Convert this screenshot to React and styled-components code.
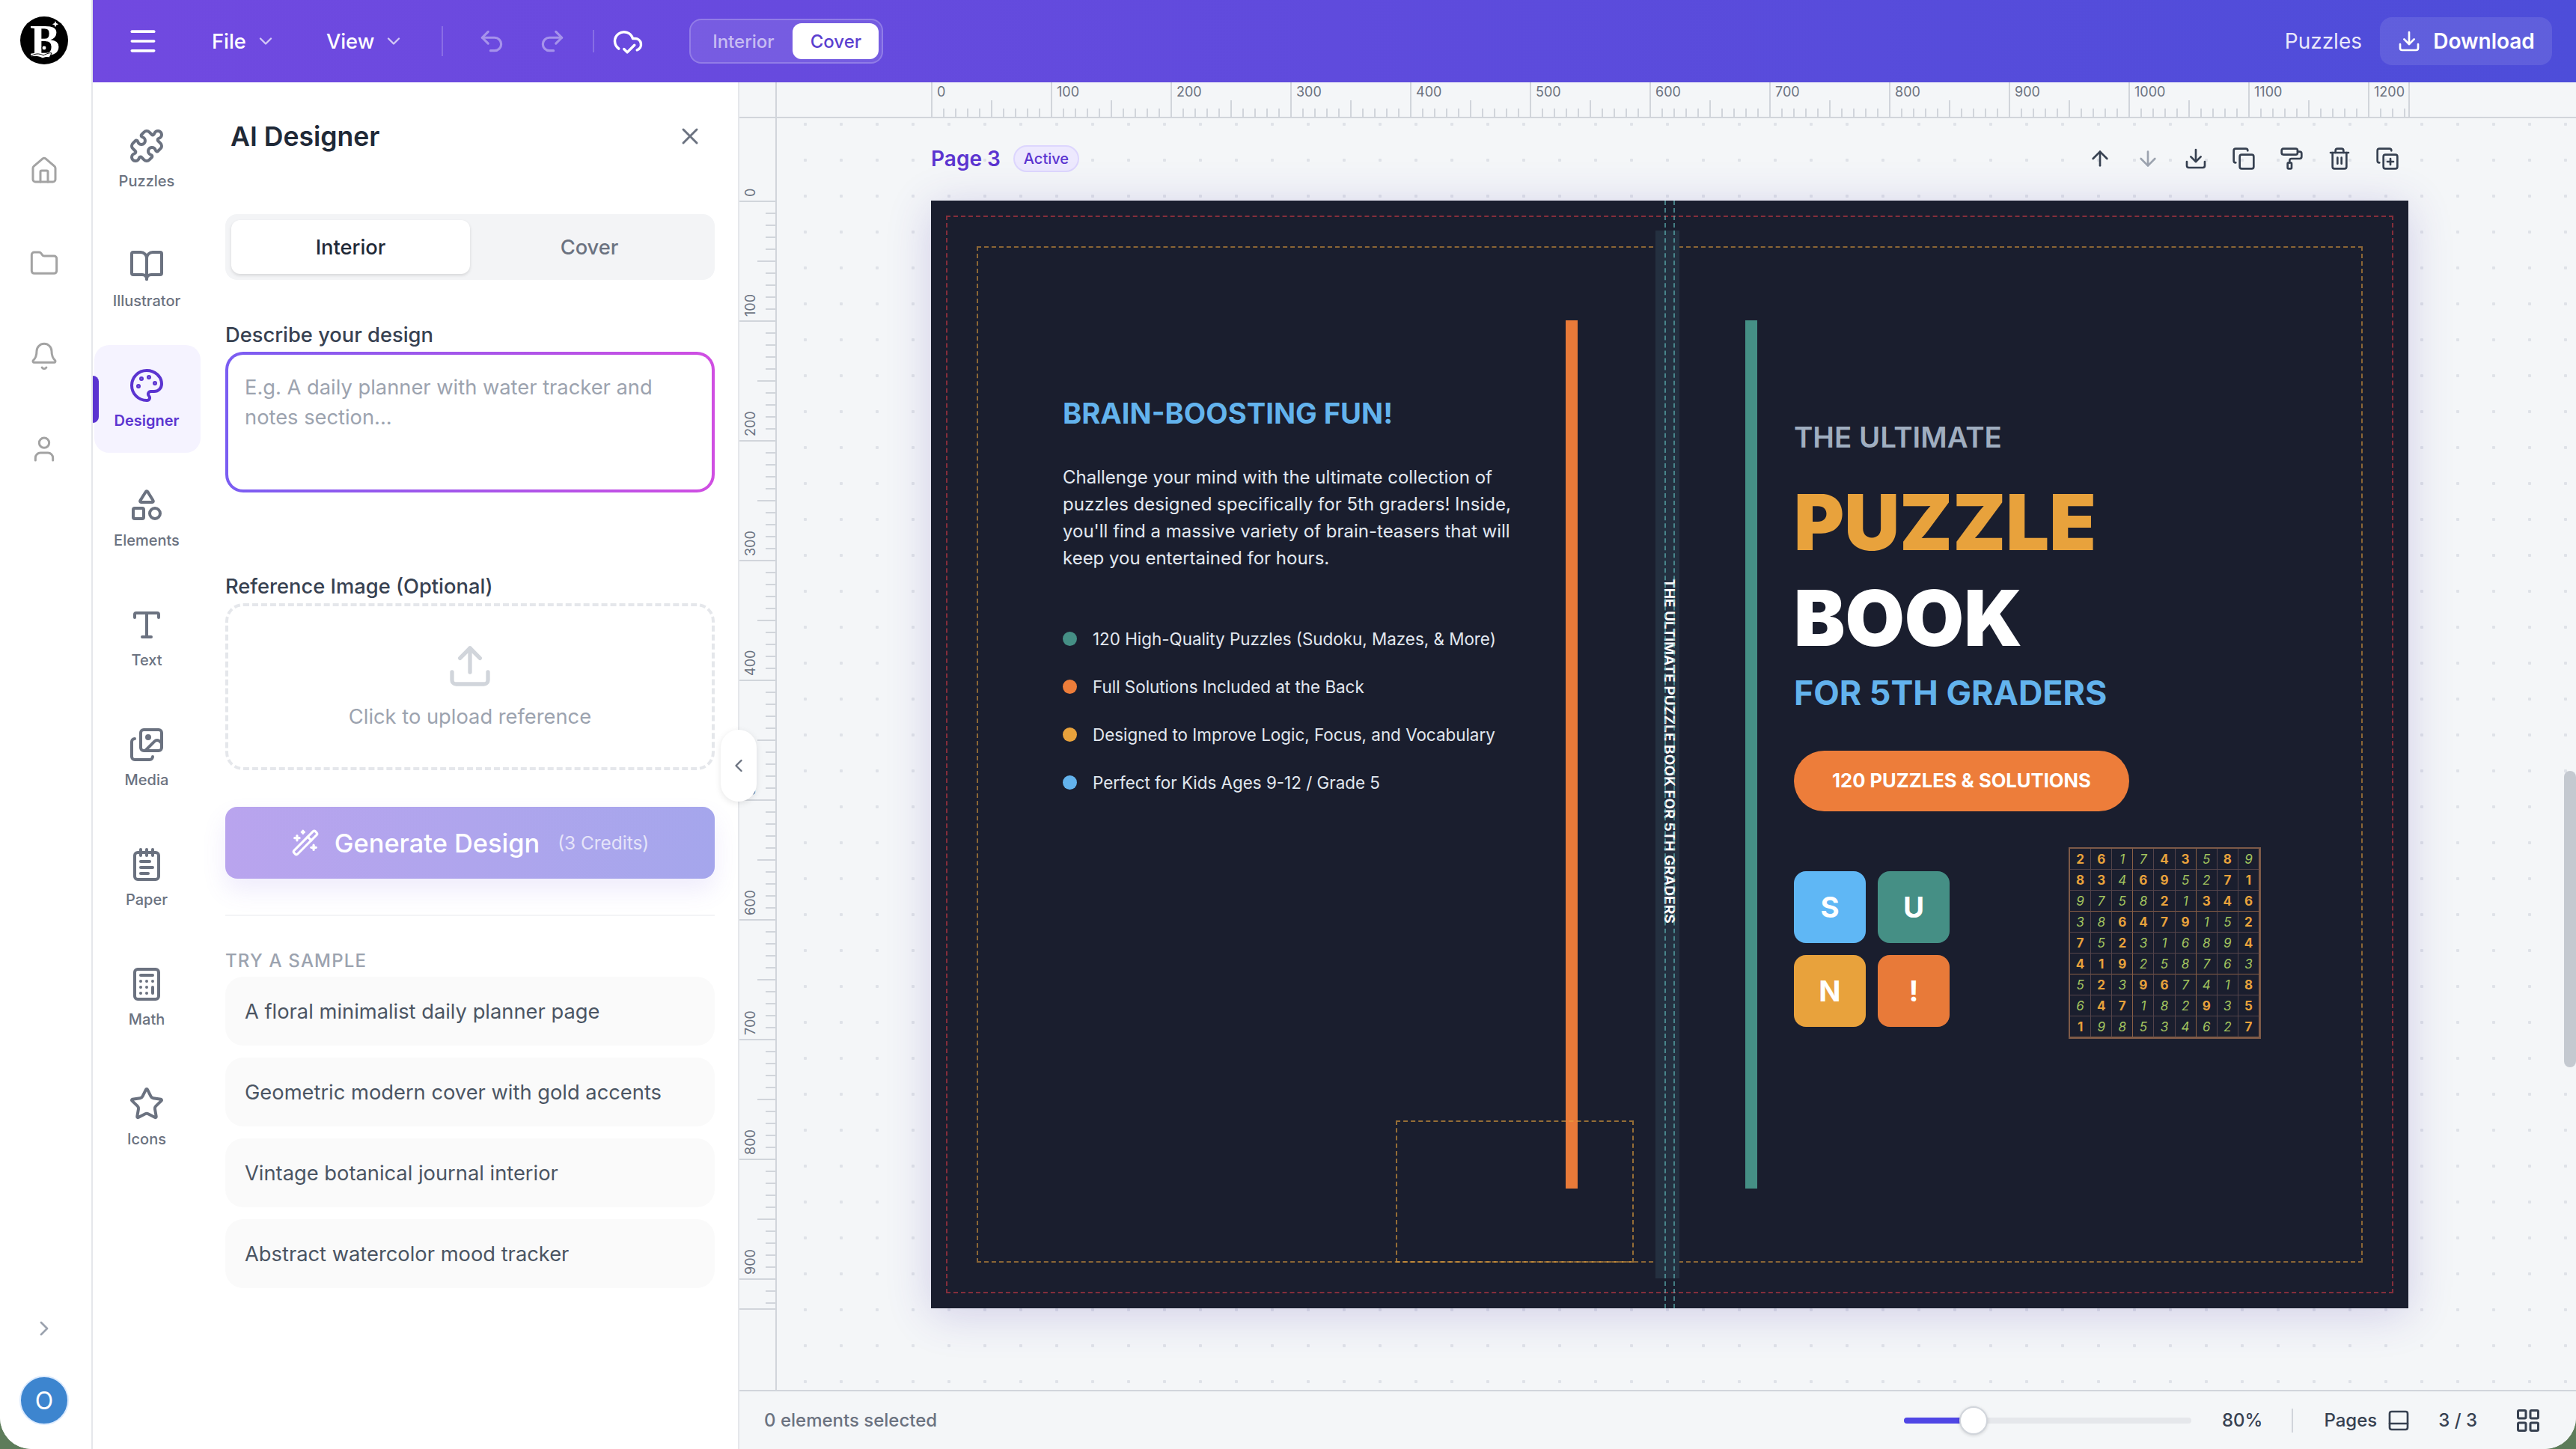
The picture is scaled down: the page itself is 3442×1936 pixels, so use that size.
import React from "react";
import styled, { createGlobalStyle } from "styled-components";
import {
  ArrowDown,
  ArrowUp,
  Bell,
  BookOpen,
  Calculator,
  ChevronDown,
  ChevronLeft,
  ChevronRight,
  CloudCheck,
  Copy,
  CopyPlus,
  Download,
  Folder,
  House,
  Images,
  LayoutGrid,
  Menu,
  NotepadText,
  PaintRoller,
  PanelBottom,
  Palette,
  Puzzle,
  Redo2,
  Shapes,
  Star,
  Trash2,
  Type,
  Undo2,
  Upload,
  User,
  WandSparkles,
  X,
} from "lucide-react";

const GlobalStyle = createGlobalStyle`
  html, body {
    margin: 0;
    width: 3442px;
    height: 1936px;
    overflow: hidden;
    background: #5d7c5a;
  }
  * { box-sizing: border-box; }
  body { font-family: Inter, "Noto Sans", sans-serif; }
`;

const Window = styled.div`
  position: relative;
  display: flex;
  width: 3442px;
  height: 1936px;
  overflow: hidden;
  background: #fff;
  border-radius: 0 0 42px 42px;
`;

/* far left rail */
const Rail = styled.nav`
  flex: 0 0 124px;
  display: flex;
  flex-direction: column;
  align-items: center;
  padding: 22px 4px 32px 0;
  border-right: 2px solid #e5e7eb;
  background: #fff;
`;
const RailIcons = styled.div`
  display: flex;
  flex-direction: column;
  gap: 84px;
  margin-top: 122px;
  color: #a3a3a3;
`;
const RailChevron = styled.div`
  margin-top: auto;
  height: 32px;
  color: #9ca3af;
`;
const Avatar = styled.div`
  display: flex;
  align-items: center;
  justify-content: center;
  width: 66px;
  height: 66px;
  margin-top: 47px;
  border-radius: 50%;
  border: 2px solid #dbeafe;
  background: #3d85cf;
  color: #fff;
  font-size: 32px;
`;

const Main = styled.div`
  flex: 1;
  display: flex;
  flex-direction: column;
  min-width: 0;
`;

/* top bar */
const TopBar = styled.header`
  flex: 0 0 110px;
  display: flex;
  align-items: center;
  padding: 0 32px 0 45px;
  background: linear-gradient(90deg, #7149e0, #4d4dd9);
  color: #fff;
`;
const MenuButton = styled.div`
  display: flex;
  align-items: center;
  gap: 12px;
  margin-left: ${({ $ml }) => $ml}px;
  font-size: 27.3px;
  font-weight: 500;
  svg { opacity: 0.7; }
`;
const BarIcon = styled.div`
  display: flex;
  margin-left: ${({ $ml }) => $ml}px;
  opacity: ${({ $dim }) => ($dim ? 0.4 : 1)};
`;
const BarDivider = styled.div`
  width: 2px;
  height: ${({ $h }) => $h}px;
  margin-left: ${({ $ml }) => $ml}px;
  background: rgba(255, 255, 255, 0.2);
`;
const ModeToggle = styled.div`
  display: flex;
  align-items: center;
  width: 259px;
  height: 60px;
  margin-left: 61px;
  padding: 0 4px;
  border: 2px solid rgba(255, 255, 255, 0.2);
  border-radius: 16px;
  background: rgba(255, 255, 255, 0.1);
`;
const ModeItem = styled.div`
  display: flex;
  align-items: center;
  justify-content: center;
  width: ${({ $on }) => ($on ? 115 : 132)}px;
  height: 48px;
  border-radius: 12px;
  font-size: 24px;
  font-weight: 500;
  background: ${({ $on }) => ($on ? "#fff" : "transparent")};
  color: ${({ $on }) => ($on ? "#5b3fcf" : "rgba(255,255,255,0.6)")};
`;
const BarRight = styled.div`
  display: flex;
  align-items: center;
  margin-left: auto;
  gap: 24px;
`;
const PuzzlesLink = styled.div`
  font-size: 28px;
  font-weight: 400;
  color: rgba(255, 255, 255, 0.9);
`;
const DownloadButton = styled.div`
  display: flex;
  align-items: center;
  justify-content: center;
  gap: 16px;
  width: 230px;
  height: 64px;
  border-radius: 16px;
  background: rgba(255, 255, 255, 0.1);
  font-size: 28px;
  font-weight: 600;
`;

const Workspace = styled.div`
  flex: 1;
  display: flex;
  min-height: 0;
`;

/* tool rail */
const Tools = styled.div`
  flex: 0 0 144px;
  display: flex;
  flex-direction: column;
  gap: 16px;
  padding-top: 31px;
  background: #fff;
`;
const Tool = styled.div`
  position: relative;
  display: flex;
  flex-direction: column;
  align-items: center;
  gap: 11px;
  height: 144px;
  margin-left: 2px;
  padding: 30px 2px 0 0;
  border-radius: 20px;
  background: ${({ $on }) => ($on ? "#f5f3ff" : "transparent")};
  color: ${({ $on }) => ($on ? "#5b34d0" : "#6b7280")};
  font-size: 20px;
  line-height: 24px;
  font-weight: ${({ $on }) => ($on ? 600 : 500)};
`;
const ToolMarker = styled.span`
  position: absolute;
  left: -2px;
  top: 41px;
  width: 8px;
  height: 63px;
  border-radius: 0 8px 8px 0;
  background: #5b34d0;
`;

/* AI designer panel */
const Panel = styled.aside`
  position: relative;
  flex: 0 0 720px;
  display: flex;
  flex-direction: column;
  padding: 50px 31px 0 33px;
  border-right: 2px solid #e5e7eb;
  background: #fff;
`;
const PanelHeader = styled.div`
  display: flex;
  align-items: center;
  justify-content: space-between;
  height: 44px;
  padding: 0 15px 0 7px;
  color: #6b7280;
`;
const PanelTitle = styled.h2`
  margin: 0;
  font-size: 35.6px;
  font-weight: 600;
  color: #1f2937;
`;
const Tabs = styled.div`
  display: flex;
  height: 88px;
  margin-top: 82px;
  padding: 8px;
  border-radius: 16px;
  background: #f3f4f6;
`;
const TabItem = styled.div`
  flex: 1;
  display: flex;
  align-items: center;
  justify-content: center;
  border-radius: 12px;
  font-size: 27.3px;
  font-weight: 500;
  background: ${({ $on }) => ($on ? "#fff" : "transparent")};
  color: ${({ $on }) => ($on ? "#1f2937" : "#6b7280")};
  box-shadow: ${({ $on }) => ($on ? "0 2px 4px rgba(0,0,0,0.12)" : "none")};
`;
const FieldLabel = styled.label`
  display: block;
  height: 36px;
  margin-top: ${({ $mt }) => $mt}px;
  font-size: 27.3px;
  line-height: 36px;
  font-weight: 500;
  color: #374151;
`;
const DesignInput = styled.textarea`
  display: block;
  width: 100%;
  height: 188px;
  margin-top: 4px;
  padding: 24px 22px;
  border: 4px solid transparent;
  border-radius: 24px;
  outline: none;
  resize: none;
  font-family: Inter, sans-serif;
  font-size: 27.3px;
  line-height: 40px;
  background: linear-gradient(#fff, #fff) padding-box,
    linear-gradient(90deg, #7a5df2, #d04ee2) border-box;
  &::placeholder { color: #9ca3af; opacity: 1; }
`;
const UploadBox = styled.div`
  display: flex;
  flex-direction: column;
  align-items: center;
  height: 223px;
  margin-top: 4px;
  padding-top: 48px;
  border: 4px dashed #e5e7eb;
  border-radius: 24px;
  color: #d1d5db;
`;
const UploadText = styled.div`
  margin-top: 18px;
  font-size: 27.3px;
  line-height: 36px;
  color: #9ca3af;
`;
const GenerateButton = styled.div`
  display: flex;
  align-items: center;
  justify-content: center;
  height: 96px;
  margin-top: 49px;
  border-radius: 16px;
  background: linear-gradient(90deg, #b9a4ee, #a5a6ec);
  box-shadow: 0 16px 32px rgba(120, 100, 230, 0.12);
  color: #fff;
  font-size: 34.4px;
  font-weight: 500;
`;
const Credits = styled.span`
  margin-left: 24px;
  font-size: 24.4px;
  font-weight: 400;
  opacity: 0.7;
`;
const GenerateLabel = styled.span`
  margin-left: 20px;
`;
const PanelRule = styled.div`
  height: 2px;
  margin-top: 48px;
  background: #f3f4f6;
`;
const SampleHeading = styled.div`
  height: 30px;
  margin-top: 45px;
  font-size: 24px;
  line-height: 30px;
  font-weight: 500;
  letter-spacing: 1.2px;
  color: #9ca3af;
`;
const SampleList = styled.div`
  display: flex;
  flex-direction: column;
  gap: 16px;
  margin-top: 6px;
`;
const Sample = styled.div`
  display: flex;
  align-items: center;
  height: 92px;
  padding: 0 26px;
  border-radius: 24px;
  background: #fafafa;
  font-size: 27.3px;
  color: #4b5563;
`;
const CollapseHandle = styled.div`
  position: absolute;
  top: 865px;
  right: -25px;
  z-index: 3;
  display: flex;
  align-items: center;
  justify-content: center;
  width: 48px;
  height: 96px;
  border-radius: 24px;
  background: #fff;
  box-shadow: 0 2px 8px rgba(0, 0, 0, 0.1);
  color: #6b7280;
`;

/* canvas */
const Canvas = styled.main`
  flex: 1;
  display: flex;
  flex-direction: column;
  min-width: 0;
  background: #f4f6f8;
`;
const TopRuler = styled.div`
  flex: 0 0 48px;
  border-bottom: 2px solid #d1d5db;
  svg { display: block; }
`;
const CanvasMiddle = styled.div`
  flex: 1;
  display: flex;
  min-height: 0;
`;
const SideRuler = styled.div`
  flex: 0 0 50px;
  border-right: 2px solid #d1d5db;
  svg { display: block; }
`;
const Stage = styled.div`
  position: relative;
  flex: 1;
  padding: 36px 0 0 206px;
  overflow: hidden;
  background-color: #f4f6f8;
  background-image: radial-gradient(circle, #dfe2e8 2px, transparent 2.5px);
  background-size: 48px 48px;
  background-position: 14px -16px;
`;
const PageHeader = styled.div`
  display: flex;
  align-items: center;
  width: 1974px;
  height: 36px;
`;
const PageName = styled.div`
  font-size: 28px;
  font-weight: 600;
  color: #5b34d0;
`;
const ActiveBadge = styled.div`
  display: flex;
  align-items: center;
  height: 36px;
  margin-left: 17px;
  padding: 0 12px;
  border: 2px solid #ddd6fe;
  border-radius: 18px;
  background: #ede9fe;
  font-size: 20px;
  font-weight: 500;
  color: #5b34d0;
`;
const PageActions = styled.div`
  display: flex;
  gap: 32px;
  margin-left: auto;
  padding-right: 12px;
  color: #374151;
`;
const ActionIcon = styled.div`
  display: flex;
  color: ${({ $dim }) => ($dim ? "#9ca3af" : "inherit")};
`;
const ScrollThumb = styled.div`
  position: absolute;
  top: 872px;
  right: 0;
  width: 16px;
  height: 396px;
  border-radius: 8px;
  background: #c4c9d0;
`;

/* the book cover */
const Cover = styled.div`
  position: relative;
  display: flex;
  width: 1974px;
  height: 1480px;
  margin-top: 38px;
  padding: 160px 0 160px 176px;
  background: #1a1e2e;
  box-shadow: 0 8px 56px rgba(70, 50, 170, 0.2);
  color: #fff;
`;
const Guide = styled.div`
  position: absolute;
  inset: ${({ $inset }) => $inset}px;
  border: 2px dashed ${({ $color }) => $color};
`;
const BarcodeZone = styled.div`
  position: absolute;
  left: 621px;
  top: 1229px;
  width: 318px;
  height: 190px;
  border: 2px dashed rgba(232, 162, 60, 0.6);
`;
const Spine = styled.div`
  position: absolute;
  left: 968px;
  top: 40px;
  bottom: 40px;
  display: flex;
  align-items: center;
  justify-content: center;
  width: 32px;
  background: #243040;
`;
const SpineText = styled.div`
  writing-mode: vertical-rl;
  margin-bottom: 9px;
  margin-left: 6px;
  font-size: 19.1px;
  font-weight: 700;
  white-space: nowrap;
`;
const FoldLine = styled.div`
  position: absolute;
  left: ${({ $x }) => $x}px;
  top: 0;
  bottom: 0;
  border-left: 2px dashed rgba(96, 190, 190, 0.6);
`;
const BackCopy = styled.div`
  flex: 0 0 672px;
  padding-top: 100px;
`;
const BackTitle = styled.h3`
  margin: 0;
  font-size: 38.2px;
  line-height: 48px;
  font-weight: 700;
  color: #63b3ed;
`;
const BackBlurb = styled.p`
  margin: 44px 0 0;
  font-size: 24px;
  line-height: 35.84px;
  color: #e2e8f0;
  white-space: nowrap;
`;
const FeatureList = styled.ul`
  display: flex;
  flex-direction: column;
  gap: 28px;
  margin: 72px 0 0;
  padding: 0;
  list-style: none;
`;
const Feature = styled.li`
  display: flex;
  align-items: center;
  gap: 21px;
  height: 36px;
  font-size: 22.4px;
  color: #e2e8f0;
  &::before {
    content: "";
    width: 19px;
    height: 19px;
    border-radius: 50%;
    background: ${({ $dot }) => $dot};
  }
`;
const CoverBar = styled.div`
  flex: 0 0 16px;
  margin-left: ${({ $ml }) => $ml}px;
  background: ${({ $color }) => $color};
`;
const FrontCopy = styled.div`
  padding: 132px 0 0 49px;
`;
const FrontKicker = styled.div`
  font-size: 38.4px;
  line-height: 48px;
  font-weight: 600;
  color: #a0aec0;
`;
const FrontTitle = styled.div`
  margin-top: ${({ $mt }) => $mt}px;
  font-size: 102.4px;
  line-height: 128px;
  font-weight: 900;
  color: ${({ $color }) => $color};
`;
const FrontGrade = styled.div`
  margin-top: 8px;
  font-size: 44.8px;
  line-height: 56px;
  font-weight: 700;
  color: #63b3ed;
`;
const FrontPill = styled.div`
  display: inline-flex;
  align-items: center;
  height: 81px;
  margin-top: 49px;
  padding: 0 51px 2px;
  border-radius: 41px;
  background: #ed7d3a;
  font-size: 25.6px;
  font-weight: 700;
`;
const FrontBottom = styled.div`
  display: flex;
  align-items: flex-start;
  gap: 159px;
  margin-top: 48px;
`;
const LetterGrid = styled.div`
  display: grid;
  grid-template-columns: 96px 96px;
  grid-auto-rows: 96px;
  gap: 16px;
  margin-top: 32px;
`;
const LetterTile = styled.div`
  display: flex;
  align-items: center;
  justify-content: center;
  border-radius: 16px;
  background: ${({ $bg }) => $bg};
  font-size: 38.4px;
  font-weight: 700;
`;
const SudokuGrid = styled.div`
  display: grid;
  grid-template-columns: repeat(9, 1fr);
  grid-auto-rows: 1fr;
  width: 257px;
  height: 256px;
  border: 2px solid #7d5a48;
`;
const SudokuCell = styled.div`
  display: flex;
  align-items: center;
  justify-content: center;
  border-right: 1px solid ${({ $thickR }) => ($thickR ? "#8a5f45" : "#54444a")};
  border-bottom: 1px solid ${({ $thickB }) => ($thickB ? "#8a5f45" : "#54444a")};
  font-size: 17px;
  font-weight: ${({ $given }) => ($given ? 700 : 400)};
  font-style: ${({ $given }) => ($given ? "normal" : "italic")};
  color: ${({ $given }) => ($given ? "#e8a23c" : "#a3c45f")};
`;

/* footer */
const Footer = styled.footer`
  flex: 0 0 79px;
  display: flex;
  align-items: center;
  padding: 0 46px 0 33px;
  border-top: 2px solid #d1d5db;
  font-size: 24px;
  color: #374151;
`;
const SelectionNote = styled.div`
  font-weight: 500;
  color: #6b7280;
`;
const ZoomSlider = styled.div`
  position: relative;
  width: 384px;
  height: 8px;
  margin-left: auto;
  border-radius: 4px;
  background: #e5e7eb;
`;
const ZoomFill = styled.div`
  height: 100%;
  border-radius: 4px;
  background: #4f46e5;
`;
const ZoomThumb = styled.div`
  position: absolute;
  top: -15px;
  left: 74px;
  width: 38px;
  height: 38px;
  border: 2px solid #d1d5db;
  border-radius: 50%;
  background: #fff;
  box-shadow: 0 1px 4px rgba(0, 0, 0, 0.15);
`;
const FooterText = styled.div`
  margin-left: ${({ $ml }) => $ml}px;
  font-weight: 500;
`;
const FooterDivider = styled.div`
  width: 2px;
  height: 32px;
  margin-left: 39px;
  background: #d1d5db;
`;
const FooterIcon = styled.div`
  display: flex;
  margin-left: ${({ $ml }) => $ml}px;
`;

const railIcons = [House, Folder, Bell, User];
const tools = [
  { label: "Puzzles", icon: Puzzle },
  { label: "Illustrator", icon: BookOpen },
  { label: "Designer", icon: Palette, on: true },
  { label: "Elements", icon: Shapes },
  { label: "Text", icon: Type },
  { label: "Media", icon: Images },
  { label: "Paper", icon: NotepadText },
  { label: "Math", icon: Calculator },
  { label: "Icons", icon: Star },
];
const samples = [
  "A floral minimalist daily planner page",
  "Geometric modern cover with gold accents",
  "Vintage botanical journal interior",
  "Abstract watercolor mood tracker",
];
const features = [
  { text: "120 High-Quality Puzzles (Sudoku, Mazes, & More)", dot: "#458f85" },
  { text: "Full Solutions Included at the Back", dot: "#ed7d3a" },
  { text: "Designed to Improve Logic, Focus, and Vocabulary", dot: "#e8a23c" },
  { text: "Perfect for Kids Ages 9-12 / Grade 5", dot: "#63b3ed" },
];
const tiles = [
  { letter: "S", bg: "#5fb7f5" },
  { letter: "U", bg: "#458f85" },
  { letter: "N", bg: "#e8a23c" },
  { letter: "!", bg: "#e87a39" },
];
const sudoku = [
  ["261743589", "110011010"],
  ["834695271", "110110011"],
  ["975821346", "000010111"],
  ["386479152", "001111001"],
  ["752316894", "101000001"],
  ["419258763", "111000000"],
  ["523967418", "010110001"],
  ["647182935", "011000101"],
  ["198534627", "100000001"],
];

function Logo() {
  return (
    <svg width="64" height="64" viewBox="0 0 64 64">
      <circle cx="32" cy="32" r="32" fill="#000" />
      <text x="13" y="52" fontFamily="Liberation Serif" fontWeight="700" fontSize="60" fill="#fff">
        B
      </text>
      <path d="M47 6l1.2 3 3 1.2-3 1.2-1.2 3-1.2-3-3-1.2 3-1.2z" fill="#fff" />
      <path d="M14 54c5-5 11-5 17-2 4-2 8-4 11-3l-3 6c-4-1-7 0-9 1-5-3-11-3-16-2z" fill="#fff" stroke="#000" strokeWidth="1" />
      <circle cx="32" cy="42" r="3" fill="#fff" stroke="#000" strokeWidth="1" />
    </svg>
  );
}

function HorizontalRuler() {
  const originX = 257;
  const marks = [];
  for (let i = 0; i * 16 < 1974; i++) {
    const x = originX + i * 16;
    const units = i * 10;
    const len = units % 100 === 0 ? 47 : units % 50 === 0 ? 23 : 12;
    marks.push(<line key={i} x1={x} x2={x} y1={47 - len} y2={47} stroke="#d1d5db" strokeWidth="2" />);
    if (units % 100 === 0) {
      marks.push(
        <text key={`t${i}`} x={x + 7} y={19} fontSize="18" fontFamily="Inter" fill="#6b7280">
          {units}
        </text>
      );
    }
  }
  return (
    <svg width="2454" height="46">
      <line x1="49" x2="49" y1="0" y2="46" stroke="#d1d5db" strokeWidth="2" />
      <line x1={originX + 1974} x2={originX + 1974} y1="0" y2="46" stroke="#d1d5db" strokeWidth="2" />
      {marks}
    </svg>
  );
}

function VerticalRuler() {
  const originY = 111;
  const marks = [];
  for (let i = 0; i * 16 <= 1480; i++) {
    const y = originY + i * 16;
    const units = i * 10;
    const len = units % 100 === 0 ? 48 : units % 50 === 0 ? 24 : 13;
    marks.push(<line key={i} x1={48 - len} x2={48} y1={y} y2={y} stroke="#d1d5db" strokeWidth="2" />);
    if (units % 100 === 0) {
      marks.push(
        <text
          key={`t${i}`}
          x={21}
          y={y - 6}
          fontSize="18"
          fontFamily="Inter"
          fill="#6b7280"
          transform={`rotate(-90 21 ${y - 6})`}
        >
          {units}
        </text>
      );
    }
  }
  return (
    <svg width="48" height="1699">
      <line x1="0" x2="48" y1={originY + 1480} y2={originY + 1480} stroke="#d1d5db" strokeWidth="2" />
      {marks}
    </svg>
  );
}

function BookCover() {
  return (
    <Cover>
      <Guide $inset={20} $color="rgba(220, 60, 70, 0.55)" />
      <Guide $inset={61} $color="rgba(232, 162, 60, 0.55)" />
      <BarcodeZone />
      <Spine>
        <SpineText>THE ULTIMATE PUZZLE BOOK FOR 5TH GRADERS</SpineText>
      </Spine>
      <FoldLine $x={980} />
      <FoldLine $x={992} />

      <BackCopy>
        <BackTitle>BRAIN-BOOSTING FUN!</BackTitle>
        <BackBlurb>
          Challenge your mind with the ultimate collection of
          <br />
          puzzles designed specifically for 5th graders! Inside,
          <br />
          you'll find a massive variety of brain-teasers that will
          <br />
          keep you entertained for hours.
        </BackBlurb>
        <FeatureList>
          {features.map((f) => (
            <Feature key={f.text} $dot={f.dot}>
              {f.text}
            </Feature>
          ))}
        </FeatureList>
      </BackCopy>
      <CoverBar $color="#e87a39" />
      <CoverBar $ml={224} $color="#458f85" />

      <FrontCopy>
        <FrontKicker>THE ULTIMATE</FrontKicker>
        <FrontTitle $mt={26} $color="#e8a23c">
          PUZZLE
        </FrontTitle>
        <FrontTitle $mt={0} $color="#fff">
          BOOK
        </FrontTitle>
        <FrontGrade>FOR 5TH GRADERS</FrontGrade>
        <FrontPill>120 PUZZLES &amp; SOLUTIONS</FrontPill>
        <FrontBottom>
          <LetterGrid>
            {tiles.map((t) => (
              <LetterTile key={t.letter} $bg={t.bg}>
                {t.letter}
              </LetterTile>
            ))}
          </LetterGrid>
          <SudokuGrid>
            {sudoku.map(([digits, givens], r) =>
              digits.split("").map((d, c) => (
                <SudokuCell
                  key={`${r}-${c}`}
                  $given={givens[c] === "1"}
                  $thickR={c % 3 === 2}
                  $thickB={r % 3 === 2}
                >
                  {d}
                </SudokuCell>
              ))
            )}
          </SudokuGrid>
        </FrontBottom>
      </FrontCopy>
    </Cover>
  );
}

export default function App() {
  return (
    <Window>
      <GlobalStyle />
      <Rail>
        <Logo />
        <RailIcons>
          {railIcons.map((Icon, i) => (
            <Icon key={i} size={40} strokeWidth={1.8} />
          ))}
        </RailIcons>
        <RailChevron>
          <ChevronRight size={32} />
        </RailChevron>
        <Avatar>O</Avatar>
      </Rail>

      <Main>
        <TopBar>
          <Menu size={44} />
          <MenuButton $ml={70}>
            File <ChevronDown size={28} />
          </MenuButton>
          <MenuButton $ml={67}>
            View <ChevronDown size={28} />
          </MenuButton>
          <BarDivider $h={40} $ml={50} />
          <BarIcon $ml={46} $dim>
            <Undo2 size={38} />
          </BarIcon>
          <BarIcon $ml={43} $dim>
            <Redo2 size={38} />
          </BarIcon>
          <BarDivider $h={30} $ml={35} />
          <BarIcon $ml={24}>
            <CloudCheck size={42} />
          </BarIcon>
          <ModeToggle>
            <ModeItem>Interior</ModeItem>
            <ModeItem $on>Cover</ModeItem>
          </ModeToggle>
          <BarRight>
            <PuzzlesLink>Puzzles</PuzzlesLink>
            <DownloadButton>
              <Download size={32} />
              Download
            </DownloadButton>
          </BarRight>
        </TopBar>

        <Workspace>
          <Tools>
            {tools.map(({ label, icon: Icon, on }) => (
              <Tool key={label} $on={on}>
                {on && <ToolMarker />}
                <Icon size={48} strokeWidth={2} />
                {label}
              </Tool>
            ))}
          </Tools>

          <Panel>
            <PanelHeader>
              <PanelTitle>AI Designer</PanelTitle>
              <X size={36} />
            </PanelHeader>
            <Tabs>
              <TabItem $on>Interior</TabItem>
              <TabItem>Cover</TabItem>
            </Tabs>
            <FieldLabel $mt={56}>Describe your design</FieldLabel>
            <DesignInput placeholder="E.g. A daily planner with water tracker and notes section..." />
            <FieldLabel $mt={108}>Reference Image (Optional)</FieldLabel>
            <UploadBox>
              <Upload size={64} strokeWidth={2} />
              <UploadText>Click to upload reference</UploadText>
            </UploadBox>
            <GenerateButton>
              <WandSparkles size={38} />
              <GenerateLabel>Generate Design</GenerateLabel>
              <Credits>(3 Credits)</Credits>
            </GenerateButton>
            <PanelRule />
            <SampleHeading>TRY A SAMPLE</SampleHeading>
            <SampleList>
              {samples.map((s) => (
                <Sample key={s}>{s}</Sample>
              ))}
            </SampleList>
            <CollapseHandle>
              <ChevronLeft size={28} />
            </CollapseHandle>
          </Panel>

          <Canvas>
            <TopRuler>
              <HorizontalRuler />
            </TopRuler>
            <CanvasMiddle>
              <SideRuler>
                <VerticalRuler />
              </SideRuler>
              <Stage>
                <PageHeader>
                  <PageName>Page 3</PageName>
                  <ActiveBadge>Active</ActiveBadge>
                  <PageActions>
                    <ActionIcon><ArrowUp size={32} /></ActionIcon>
                    <ActionIcon $dim><ArrowDown size={32} /></ActionIcon>
                    <ActionIcon><Download size={32} /></ActionIcon>
                    <ActionIcon><Copy size={32} /></ActionIcon>
                    <ActionIcon><PaintRoller size={32} /></ActionIcon>
                    <ActionIcon><Trash2 size={32} /></ActionIcon>
                    <ActionIcon><CopyPlus size={32} /></ActionIcon>
                  </PageActions>
                </PageHeader>
                <BookCover />
                <ScrollThumb />
              </Stage>
            </CanvasMiddle>
            <Footer>
              <SelectionNote>0 elements selected</SelectionNote>
              <ZoomSlider>
                <ZoomFill style={{ width: "21%" }} />
                <ZoomThumb />
              </ZoomSlider>
              <FooterText $ml={41}>80%</FooterText>
              <FooterDivider />
              <FooterText $ml={41}>Pages</FooterText>
              <FooterIcon $ml={13}>
                <PanelBottom size={32} />
              </FooterIcon>
              <FooterText $ml={37}>3 / 3</FooterText>
              <FooterIcon $ml={50}>
                <LayoutGrid size={36} />
              </FooterIcon>
            </Footer>
          </Canvas>
        </Workspace>
      </Main>
    </Window>
  );
}
